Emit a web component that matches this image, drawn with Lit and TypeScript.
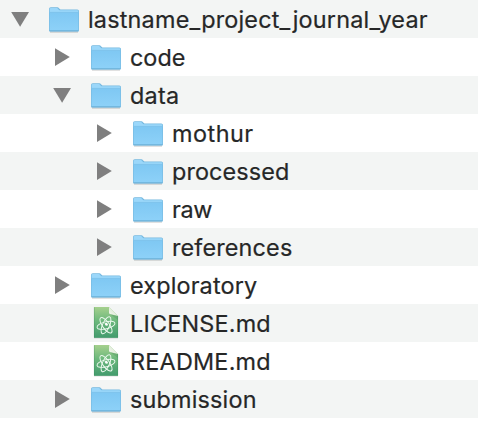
import { LitElement, html, svg, css } from "lit";
import { customElement, property } from "lit/decorators.js";

type Kind = "open" | "closed" | "file";
interface Entry {
  name: string;
  level: number;
  kind: Kind;
  tracking: number;
}

const ENTRIES: Entry[] = [
  { name: "lastname_project_journal_year", level: 0, kind: "open", tracking: 0.2 },
  { name: "code", level: 1, kind: "closed", tracking: 0 },
  { name: "data", level: 1, kind: "open", tracking: 0.25 },
  { name: "mothur", level: 2, kind: "closed", tracking: 0.5 },
  { name: "processed", level: 2, kind: "closed", tracking: 0.1 },
  { name: "raw", level: 2, kind: "closed", tracking: -0.3 },
  { name: "references", level: 2, kind: "closed", tracking: 0.15 },
  { name: "exploratory", level: 1, kind: "closed", tracking: 0.15 },
  { name: "LICENSE.md", level: 1, kind: "file", tracking: 0.2 },
  { name: "README.md", level: 1, kind: "file", tracking: 0.22 },
  { name: "submission", level: 1, kind: "closed", tracking: 0.18 },
];

@customElement("folder-icon")
class FolderIcon extends LitElement {
  static styles = css`
    :host, svg { display: block; }
  `;
  render() {
    return html`<svg width="34" height="38" viewBox="0 0 34 38">
      <defs>
        <linearGradient id="front" x1="0" y1="0" x2="0" y2="1">
          <stop offset="0" stop-color="#7fc8f3" />
          <stop offset="1" stop-color="#8dd1f8" />
        </linearGradient>
      </defs>
      <path d="M3 32.1H31" stroke="#000" stroke-opacity=".2" stroke-width="1" />
      <path d="M2 9Q2 7.3 3.7 7.3H10.4Q11.4 7.3 12 8.2L12.8 9Q13.3 9.6 14.4 9.6H30.3Q32 9.6 32 11.1V30.2Q32 31.5 30.6 31.5H3.4Q2 31.5 2 30.2Z" fill="#76b9e0" />
      <path d="M2.6 9Q2.6 8 3.8 8H10.2L11.8 9.7Q12.4 10.3 13.7 10.3H30.3Q31.4 10.3 31.4 11.4V13H2.6Z" fill="#9bd7fa" />
      <path d="M2.6 12.7H31.4V30.5H2.6Z" fill="url(#front)" />
      <path d="M2.3 12.4H31.7" stroke="#74bce6" stroke-width=".7" />
      <path d="M2.5 30.9H31.5" stroke="#65a9d0" stroke-width=".8" />
    </svg>`;
  }
}

@customElement("atom-file-icon")
class AtomFileIcon extends LitElement {
  static styles = css`
    :host, svg { display: block; }
  `;
  render() {
    return html`<svg width="34" height="38" viewBox="0 0 34 38">
      <defs>
        <linearGradient id="page" x1="0" y1="0" x2="0" y2="1">
          <stop offset="0" stop-color="#a5d08d" />
          <stop offset=".45" stop-color="#6cb87c" />
          <stop offset="1" stop-color="#429b6d" />
        </linearGradient>
        <linearGradient id="fold" x1="0" y1="1" x2="1" y2="0">
          <stop offset="0" stop-color="#f5f8f2" />
          <stop offset="1" stop-color="#cfe2c5" />
        </linearGradient>
      </defs>
      <path d="M5 34.1H29" stroke="#000" stroke-opacity=".15" stroke-width=".8" />
      <path d="M5 3H20L29 12V33.8H5Z" fill="url(#page)" />
      <path d="M5.3 3.3V33.5H28.7V12" fill="none" stroke="#368957" stroke-opacity=".5" stroke-width=".6" />
      <path d="M20 3L29 12L21.5 10.2Q20 9.8 20 8.4Z" fill="url(#fold)" />
      <path d="M20.8 10L29 12V16Z" fill="#347e4d" opacity=".25" />
      <g fill="none" stroke="#eefaf0" stroke-width=".95">
        ${[-14, 54, 114].map((a) => svg`<ellipse cx="17" cy="21.3" rx="9.2" ry="3.5" transform="rotate(${a} 17 21.3)" />`)}
      </g>
      <path d="M15.5 19.6L17.6 18.8L19 20.2L18.4 21.8L16.6 21.6Z" fill="#fff" />
    </svg>`;
  }
}

@customElement("tree-row")
class TreeRow extends LitElement {
  @property({ attribute: false }) entry!: Entry;

  static styles = css`
    :host { display: block; height: 38px; }
    .row { display: flex; height: 38px; align-items: center; }
    .toggle { flex: none; width: 40px; height: 38px; margin-right: 7px; }
    .toggle path { fill: #7f7f7f; }
    .name {
      margin-left: 7px;
      padding-top: 2px;
      font: 400 23.4px/38px Inter, "Liberation Sans", sans-serif;
      color: #262727;
      -webkit-text-stroke: 0.2px #262727;
      white-space: pre;
    }
  `;
  render() {
    const { name, level, kind, tracking } = this.entry;
    return html`<div class="row" style="padding-left:${level * 42}px">
      <svg class="toggle" viewBox="0 0 40 38">
        ${kind === "open" ? svg`<path d="M11.2 12H29L20.1 26.8Z" />` : ""}
        ${kind === "closed" ? svg`<path d="M13 10.2L27.8 19L13 27.9Z" />` : ""}
      </svg>
      ${kind === "file" ? html`<atom-file-icon></atom-file-icon>` : html`<folder-icon></folder-icon>`}
      <span class="name" style="letter-spacing:${tracking}px">${name}</span>
    </div>`;
  }
}

@customElement("app-root")
class AppRoot extends LitElement {
  static styles = css`
    :host { display: block; height: 424px; background: #fff; overflow: hidden; }
    tree-row:nth-child(odd) { background: #f3f5f4; }
  `;
  render() {
    return html`${ENTRIES.map((e) => html`<tree-row .entry=${e}></tree-row>`)}`;
  }
}
